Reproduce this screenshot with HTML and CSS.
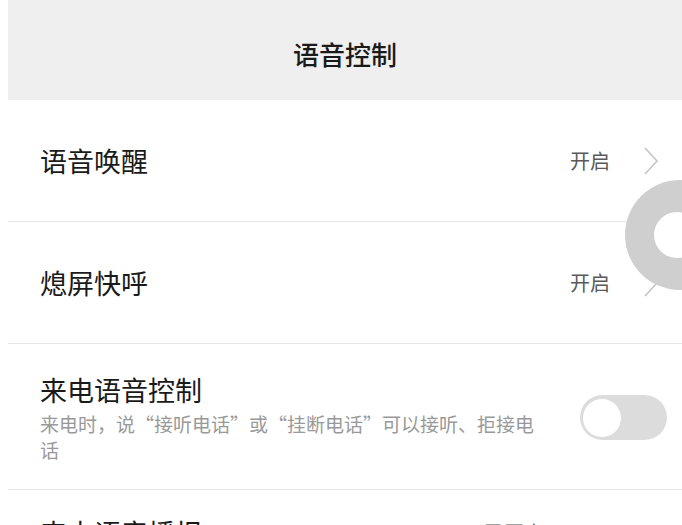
FILE: index.html
```html
<!DOCTYPE html>
<html lang="zh-CN">
<head>
<meta charset="utf-8">
<link rel="stylesheet" href="styles.css">
</head>
<body>
<div class="page">
  <header class="topbar">语音控制</header>
  <div class="row">
    <div class="title">语音唤醒</div>
    <div class="right">
      <span class="value">开启</span>
      <svg class="chev" width="16" height="30" viewBox="0 0 16 30"><polyline points="2,2 14,15 2,28" fill="none" stroke="#c4c4c4" stroke-width="1.6"/></svg>
    </div>
  </div>
  <div class="row">
    <div class="title">熄屏快呼</div>
    <div class="right">
      <span class="value">开启</span>
      <svg class="chev" width="16" height="30" viewBox="0 0 16 30"><polyline points="2,2 14,15 2,28" fill="none" stroke="#c4c4c4" stroke-width="1.6"/></svg>
    </div>
  </div>
  <div class="row tall">
    <div class="textblock">
      <div class="title">来电语音控制</div>
      <div class="sub">来电时，说“接听电话”或“挂断电话”可以接听、拒接电话</div>
    </div>
    <div class="toggle"><div class="knob"></div></div>
  </div>
  <div class="row last">
    <div class="title">来电语音播报</div>
    <div class="right"><span class="value small">已开启</span></div>
  </div>
  <div class="float"><div class="hole"></div></div>
</div>
</body>
</html>
```
FILE: styles.css
```css
html, body {
  margin: 0;
  padding: 0;
  background: #ffffff;
  overflow: hidden;
}
body {
  width: 682px;
  height: 525px;
  font-family: "Noto Sans CJK SC", "Noto Sans", sans-serif;
}
.page {
  position: relative;
  padding-left: 8px;
  height: 525px;
  overflow: hidden;
}
.topbar {
  height: 100px;
  background: #efefef;
  display: flex;
  align-items: center;
  justify-content: center;
  font-size: 26px;
  font-weight: 500;
  color: #1a1a1a;
  padding-top: 6px;
  box-sizing: border-box;
}
.row {
  height: 122px;
  box-sizing: border-box;
  border-bottom: 1px solid #e6e6e6;
  display: flex;
  align-items: center;
  justify-content: space-between;
  padding-left: 32px;
  padding-right: 23px;
}
.row.tall {
  height: 146px;
  padding-right: 15px;
  padding-top: 2px;
}
.row.last {
  border-bottom: none;
  align-items: flex-start;
  padding-top: 26px;
  padding-right: 138px;
}
.title {
  font-size: 27px;
  color: #1a1a1a;
  line-height: 34px;
}
.right {
  display: flex;
  align-items: center;
  gap: 33px;
}
.value {
  font-size: 20px;
  color: #5a5a5a;
}
.value.small {
  line-height: 34px;
}
.chev {
  display: block;
}
.textblock {
  width: 500px;
}
.sub {
  font-size: 19px;
  color: #999999;
  line-height: 26px;
  margin-top: 4px;
}
.toggle {
  width: 87px;
  height: 45px;
  border-radius: 23px;
  background: #dcdcdc;
  display: flex;
  align-items: center;
  padding-left: 3px;
  box-sizing: border-box;
}
.knob {
  width: 38px;
  height: 38px;
  border-radius: 50%;
  background: #ffffff;
}
.float {
  position: absolute;
  left: 625px;
  top: 180px;
  width: 110px;
  height: 110px;
  border-radius: 50%;
  background: #cfcfcf;
  display: flex;
  align-items: center;
  justify-content: center;
}
.hole {
  width: 46px;
  height: 46px;
  border-radius: 50%;
  background: #ffffff;
  margin-left: -6px;
}
```
